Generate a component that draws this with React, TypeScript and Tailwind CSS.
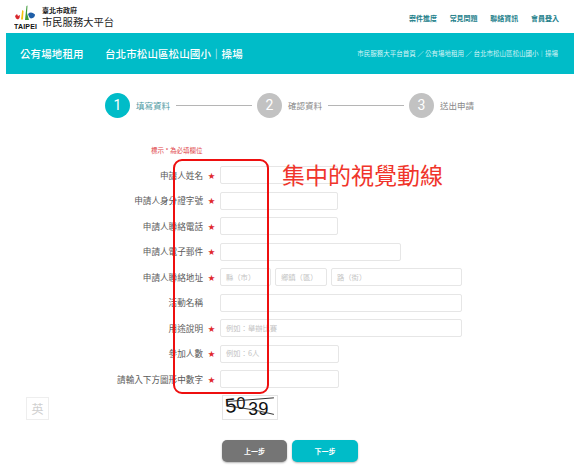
const font = { fontFamily: '"Noto Sans CJK TC", "Noto Sans", sans-serif' };

const navItems = ['案件進度', '常見問題', '聯絡資訊', '會員登入'];

function Logo() {
  return (
    <svg width="24" height="26" viewBox="0 0 24 26" className="shrink-0">
      <path d="M1 11 L3 9 L4 11 L6 10 L5.5 13 L4 14.5 L2 13.5 Z" fill="#d8262c" />
      <path d="M7 14.5 L8.2 5 L9.5 6 L9 14.5 Z" fill="#f4c20d" />
      <path d="M11 15 L12.5 1 L13.5 0.5 L13 8 L15 15 Z" fill="#3f9b3a" />
      <path d="M14 9 Q17 6 21 9.5 Q21 13 17 13.5 Q15 13 14 9 Z" fill="#1f5fa8" />
      <text x="0" y="24" fontSize="7" fontWeight="700" fill="#111" fontFamily="Liberation Sans, sans-serif" textLength="23">TAIPEI</text>
    </svg>
  );
}

function Step({ n, label, active, line }: { n: number; label: string; active?: boolean; line?: boolean }) {
  return (
    <div className="flex items-center">
      <div className={`w-[25px] h-[25px] rounded-full flex items-center justify-center text-white text-[14px] ${active ? 'bg-[#00bcc8]' : 'bg-[#c2c2c2]'}`} style={{ fontFamily: 'Roboto, sans-serif' }}>
        {n}
      </div>
      <span className={`ml-[6px] w-[34px] text-[8.5px] whitespace-nowrap ${active ? 'text-[#4f9aa3]' : 'text-[#888888]'}`}>{label}</span>
      {line && <div className="ml-[6px] mr-[5px] w-[76px] h-px bg-[#b5b5b5]" />}
    </div>
  );
}

function Field({ className = '', placeholder }: { className?: string; placeholder?: string }) {
  return (
    <div className={`h-[18px] border border-[#e6e6e6] rounded-[2px] bg-white flex items-center px-[5px] text-[7.3px] text-[#c4c4c4] whitespace-nowrap ${className}`}>
      {placeholder}
    </div>
  );
}

function Row({ label, required = true, children }: { label: string; required?: boolean; children: React.ReactNode }) {
  return (
    <div className="flex items-center h-[18px]">
      <div className="w-[203px] text-right text-[8.6px] text-[#5a5a5a] whitespace-nowrap">{label}</div>
      <div className="w-[17px] text-center text-[7px] text-[#e0262c]">{required ? '★' : ''}</div>
      <div className="flex gap-[4px]">{children}</div>
    </div>
  );
}

function Captcha() {
  return (
    <svg width="56" height="25" viewBox="0 0 56 25" className="border border-[#e4e4e4] bg-white">
      <text x="1" y="18" fontSize="22" fill="#111" fontFamily="Liberation Sans, sans-serif" transform="rotate(-6 6 12)">5</text>
      <text x="13" y="14" fontSize="18" fill="#111" fontFamily="Liberation Sans, sans-serif">0</text>
      <text x="26" y="21" fontSize="19" fill="#111" fontFamily="Liberation Sans, sans-serif">3</text>
      <text x="37" y="21" fontSize="20" fill="#111" fontFamily="Liberation Sans, sans-serif">9</text>
      <path d="M3 6 L54 2" stroke="#222" strokeWidth="1" fill="none" />
      <path d="M3 11 Q25 13 54 20" stroke="#222" strokeWidth="1" fill="none" />
    </svg>
  );
}

export default function App() {
  return (
    <div className="relative w-[578px] h-[474px] overflow-hidden bg-white" style={font}>
      {/* header */}
      <header className="h-[33px] flex items-center justify-between pl-[14px] pr-[19px] pt-[2px]">
        <div className="flex items-center gap-[4px]">
          <Logo />
          <div className="flex flex-col text-[#222222]">
            <span className="text-[7px] leading-[9px] font-bold">臺北市政府</span>
            <span className="text-[10.3px] leading-[14px]">市民服務大平台</span>
          </div>
        </div>
        <nav className="flex gap-[12.7px] pt-[2px]">
          {navItems.map((item) => (
            <span key={item} className="text-[7px] font-bold text-[#22808a]">{item}</span>
          ))}
        </nav>
      </header>

      {/* title banner */}
      <div className="mx-[6px] w-[568px] h-[41px] bg-[#00bcc8] flex items-center justify-between pl-[14px] pr-[16px] text-white">
        <div className="flex text-[10.5px] font-medium tracking-[0.1px]">
          <span className="w-[85px]">公有場地租用</span>
          <span>台北市松山區松山國小｜操場</span>
        </div>
        <div className="text-[6.5px] text-[#d8f5f7]">市民服務大平台首頁 ／ 公有場地租用 ／ 台北市松山區松山國小｜操場</div>
      </div>

      {/* steps */}
      <div className="flex pl-[105px] pt-[19px]">
        <Step n={1} label="填寫資料" active line />
        <Step n={2} label="確認資料" line />
        <Step n={3} label="送出申請" />
      </div>

      {/* form */}
      <p className="pl-[151px] mt-[26px] h-[12px] leading-[12px] text-[6.5px] text-[#e0454b]">標示 * 為必填欄位</p>
      <div className="mt-[10px] flex flex-col gap-[7.5px]">
        <Row label="申請人姓名"><Field className="w-[118px]" /></Row>
        <Row label="申請人身分證字號"><Field className="w-[118px]" /></Row>
        <Row label="申請人聯絡電話"><Field className="w-[118px]" /></Row>
        <Row label="申請人電子郵件"><Field className="w-[181px]" /></Row>
        <Row label="申請人聯絡地址">
          <Field className="w-[51px]" placeholder="縣（市）" />
          <Field className="w-[52px]" placeholder="鄉鎮（區）" />
          <Field className="w-[131px]" placeholder="路（街）" />
        </Row>
        <Row label="活動名稱" required={false}><Field className="w-[242px]" /></Row>
        <Row label="用途說明"><Field className="w-[242px]" placeholder="例如：舉辦比賽" /></Row>
        <Row label="參加人數"><Field className="w-[119px]" placeholder="例如：6人" /></Row>
        <Row label="請輸入下方圖形中數字"><Field className="w-[119px]" /></Row>
      </div>

      {/* captcha row */}
      <div className="mt-[7px] flex items-end">
        <div className="ml-[26px] w-[23px] h-[23px] border border-[#eeeeee] flex items-center justify-center text-[12px] text-[#cfcfcf]">英</div>
        <div className="ml-[173px]"><Captcha /></div>
      </div>

      {/* buttons */}
      <div className="mt-[20px] ml-[222px] flex gap-[5px]">
        <div className="w-[65px] h-[22px] rounded-[5px] bg-[#757575] text-white text-[7px] font-bold flex items-center justify-center shadow-[0_1px_2px_rgba(0,0,0,0.3)]">上一步</div>
        <div className="w-[66px] h-[22px] rounded-[5px] bg-[#00bcc8] text-white text-[7px] font-bold flex items-center justify-center shadow-[0_1px_2px_rgba(0,0,0,0.3)]">下一步</div>
      </div>

      {/* red annotation over the form */}
      <div className="absolute left-[173px] top-[159px] w-[96px] h-[235px] border-[2px] border-[#ee0f0f] rounded-[9px]" />
      <div className="absolute left-[282px] top-[159px] text-[23px] leading-[30px] text-[#f0352b] whitespace-nowrap">集中的視覺動線</div>
    </div>
  );
}
